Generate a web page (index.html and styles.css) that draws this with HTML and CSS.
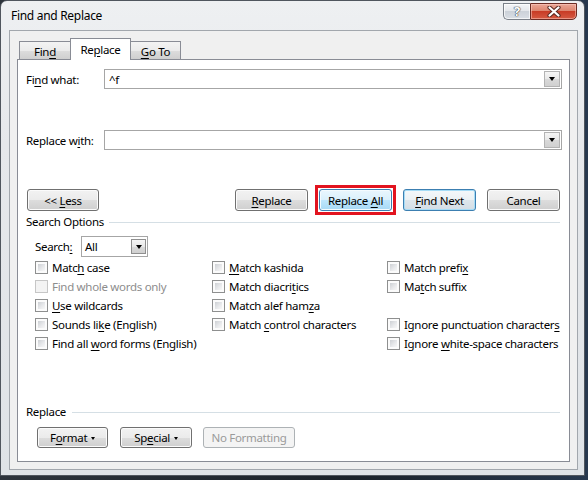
FILE: index.html
```html
<!DOCTYPE html>
<html>
<head>
<meta charset="utf-8">
<title>Find and Replace</title>
<link rel="stylesheet" href="styles.css">
</head>
<body>
<div class="window">
  <div class="titlebar">
    <span class="title">Find and Replace</span>
    <div class="caption">
      <div class="cap help">?</div>
      <div class="cap close">
        <svg width="14" height="11" viewBox="0 0 14 11">
          <path d="M2.5 1.5 L11.5 9.5 M11.5 1.5 L2.5 9.5" stroke="#5a2a22" stroke-width="4.2" stroke-linecap="round" fill="none"/>
          <path d="M2.5 1.5 L11.5 9.5 M11.5 1.5 L2.5 9.5" stroke="#ffffff" stroke-width="2.2" stroke-linecap="round" fill="none"/>
        </svg>
      </div>
    </div>
  </div>
  <div class="client">
    <div class="tabs">
      <div class="tab first"><span>Fin<u>d</u></span></div>
      <div class="tab active"><span>Re<u>p</u>lace</span></div>
      <div class="tab last"><span><u>G</u>o To</span></div>
    </div>
    <div class="panel">
      <div class="field-row r1">
        <span class="field-label">Fi<u>n</u>d what:</span>
        <div class="combo"><span class="val">^f</span><span class="drop"><i class="tri"></i></span></div>
      </div>
      <div class="field-row r2">
        <span class="field-label">Replace w<u>i</u>th:</span>
        <div class="combo"><span class="val"></span><span class="drop"><i class="tri"></i></span></div>
      </div>
      <div class="button-row">
        <div class="btn less"><span>&lt;&lt; <u>L</u>ess</span></div>
        <div class="spacer"></div>
        <div class="btn w73 gap7"><span><u>R</u>eplace</span></div>
        <div class="highlight gap7"><div class="btn hot"><span>Replace <u>A</u>ll</span></div></div>
        <div class="btn w73 default gap11"><span><u>F</u>ind Next</span></div>
        <div class="btn w73 cancel"><span>Cancel</span></div>
      </div>
      <div class="group-label"><span>Search Options</span></div>
      <div class="search-row">
        <span class="search-label">Search<u>:</u></span>
        <div class="select"><span class="val">All</span><span class="drop sdrop"><i class="tri"></i></span></div>
      </div>
      <div class="options">
        <div class="opt"><span class="box"></span><span>Matc<u>h</u> case</span></div>
        <div class="opt"><span class="box"></span><span><u>M</u>atch kashida</span></div>
        <div class="opt"><span class="box"></span><span>Match prefi<u>x</u></span></div>

        <div class="opt disabled"><span class="box"></span><span>Find whole words only</span></div>
        <div class="opt"><span class="box"></span><span>Match diacri<u>t</u>ics</span></div>
        <div class="opt"><span class="box"></span><span>Ma<u>t</u>ch suffix</span></div>

        <div class="opt"><span class="box"></span><span><u>U</u>se wildcards</span></div>
        <div class="opt"><span class="box"></span><span>Match alef ham<u>z</u>a</span></div>
        <div class="opt empty"></div>

        <div class="opt"><span class="box"></span><span>Sounds li<u>k</u>e (English)</span></div>
        <div class="opt"><span class="box"></span><span>Match <u>c</u>ontrol characters</span></div>
        <div class="opt"><span class="box"></span><span>Ignore punctuation character<u>s</u></span></div>

        <div class="opt"><span class="box"></span><span>Find all <u>w</u>ord forms (English)</span></div>
        <div class="opt empty"></div>
        <div class="opt"><span class="box"></span><span>Ignore <u>w</u>hite-space characters</span></div>
      </div>
      <div class="group-label replace-label"><span>Replace</span></div>
      <div class="bottom-row">
        <div class="btn small format"><span>F<u>o</u>rmat <i class="mini"></i></span></div>
        <div class="btn small special"><span>Sp<u>e</u>cial <i class="mini"></i></span></div>
        <div class="btn small disabled-btn"><span>No Formatting</span></div>
      </div>
    </div>
  </div>
</div>
</body>
</html>
```

FILE: styles.css
```css
* { box-sizing: border-box; }
html, body { margin: 0; padding: 0; }
body {
  width: 588px;
  height: 480px;
  overflow: hidden;
  background: linear-gradient(90deg, #2d343c, #1b222a 60%, #27384e);
  font-family: "Noto Sans", "DejaVu Sans", sans-serif;
  font-size: 11.5px;
  letter-spacing: -0.3px;
  color: #000;
}
u { text-decoration: underline; text-underline-offset: 2px; text-decoration-thickness: 1px; }

.window {
  width: 585px;
  height: 476px;
  border: 1px solid #50565e;
  border-radius: 7px 7px 0 0;
  background: linear-gradient(180deg, #eef0f2 0%, #e6e8eb 30%, #dfe3e7 100%);
  padding: 0 6px 5px 8px;
  display: flex;
  flex-direction: column;
}

.titlebar {
  height: 29px;
  display: flex;
  align-items: flex-start;
  flex: none;
}
.title {
  margin-top: 7px;
  padding-left: 2px;
  font-size: 12px;
  line-height: 16px;
}
.caption {
  margin-left: auto;
  margin-top: 2px;
  margin-right: 1px;
  display: flex;
}
.cap {
  height: 17px;
  display: flex;
  align-items: center;
  justify-content: center;
}
.help {
  width: 27px;
  border: 1px solid #7b8189;
  border-right: none;
  border-radius: 0 0 0 5px;
  background: linear-gradient(180deg, #f4f5f7 0%, #e4e7eb 45%, #ccd2d9 50%, #d9dee4 100%);
  box-shadow: inset 0 0 0 1px rgba(255,255,255,0.7);
  color: #fff;
  font-size: 13px;
  font-weight: bold;
  line-height: 15px;
  letter-spacing: 0;
  text-shadow: 0 0 1px #3c4046, 0 0 1px #3c4046, 0 0 1px #3c4046;
}
.close {
  width: 47px;
  border: 1px solid #6c2c24;
  border-radius: 0 0 5px 0;
  background: linear-gradient(180deg, #eba797 0%, #dd8670 45%, #c83c26 50%, #d55a42 100%);
  box-shadow: inset 0 0 0 1px rgba(255,210,200,0.5);
}

.client {
  height: 440px;
  flex: none;
  border: 1px solid #a2a7ad;
  background: #f0f0f0;
  padding: 7px;
  display: flex;
  flex-direction: column;
}

.tabs {
  height: 21px;
  flex: none;
  display: flex;
  align-items: flex-end;
  padding-left: 2px;
}
.tab {
  height: 18px;
  border: 1px solid #898c95;
  border-bottom: none;
  background: linear-gradient(180deg, #f3f3f3 0%, #ebebeb 50%, #dddddd 51%, #cfcfcf 100%);
  display: flex;
  align-items: center;
  justify-content: center;
  line-height: 14px;
  padding-top: 2px;
}
.tab.first { width: 51px; border-right: none; }
.tab.last { width: 50px; border-left: none; }
.tab.active {
  width: 61px;
  height: 22px;
  margin-bottom: -1px;
  background: #fff;
  position: relative;
  z-index: 1;
  padding-top: 1px;
  padding-bottom: 0;
}

.panel {
  flex: 1;
  border: 1px solid #898c95;
  background: #fff;
  padding: 0 7px 0 8px;
  display: flex;
  flex-direction: column;
}

.field-row {
  height: 20px;
  display: flex;
  align-items: center;
  flex: none;
}
.r1 { margin-top: 9px; }
.r2 { margin-top: 41px; }
.field-label { width: 78px; flex: none; }
.combo {
  flex: 1;
  height: 20px;
  border: 1px solid #a6a6a6;
  background: #fff;
  display: flex;
  align-items: center;
  padding: 0 1px 0 4px;
}
.combo .val { flex: 1; }
.drop {
  width: 16px;
  height: 16px;
  border: 1px solid #b3b3b3;
  background: linear-gradient(180deg, #f5f5f5 0%, #e8e8e8 50%, #d9d9d9 51%, #d0d0d0 100%);
  display: flex;
  align-items: center;
  justify-content: center;
  flex: none;
}
.tri {
  display: block;
  width: 0;
  height: 0;
  border-top: 4px solid #000;
  border-left: 3.5px solid transparent;
  border-right: 3.5px solid transparent;
}

.button-row {
  margin-top: 35px;
  height: 30px;
  display: flex;
  align-items: center;
  flex: none;
}
.spacer { flex: 1; }
.btn {
  height: 22px;
  border: 1px solid #707070;
  border-radius: 3px;
  background: linear-gradient(180deg, #f2f2f2 0%, #ebebeb 50%, #dddddd 51%, #cfcfcf 100%);
  box-shadow: inset 0 0 0 1px #fbfbfb;
  display: flex;
  align-items: center;
  justify-content: center;
  flex: none;
  white-space: nowrap;
}
.less { width: 72px; margin-left: 1px; }
.w73 { width: 73px; }
.gap7 { margin-right: 7px; }
.gap11 { margin-right: 11px; }
.cancel { margin-right: 2px; }
.highlight {
  width: 81px;
  height: 30px;
  border: 3px solid #e2141f;
  padding: 1px;
  flex: none;
}
.hot {
  width: 73px;
  border-color: #3c7fb1;
  background: linear-gradient(180deg, #eaf6fd 0%, #d9f0fc 50%, #bee6fd 51%, #a7d9f5 100%);
  box-shadow: inset 0 0 0 1px #f4fbfe;
}
.default {
  border-color: #3c7fb1;
  background: linear-gradient(180deg, #f4f8fa 0%, #ebf1f4 50%, #dde6ec 51%, #d3dde5 100%);
  box-shadow: inset 0 0 0 1px #a6dcf6;
}

.group-label {
  height: 14px;
  line-height: 14px;
  display: flex;
  align-items: center;
  flex: none;
}
.group-label::after {
  content: "";
  flex: 1;
  height: 1px;
  background: #d5dfe5;
  margin-left: 5px;
  margin-right: 2px;
}
.replace-label { margin-top: 52px; }
.replace-label::after { margin-left: 6px; }

.search-row {
  margin-top: 7px;
  height: 21px;
  display: flex;
  align-items: center;
  flex: none;
}
.search-label { width: 46px; margin-left: 9px; flex: none; }
.select {
  width: 67px;
  height: 21px;
  border: 1px solid #a6a6a6;
  display: flex;
  align-items: center;
  padding: 0 1px 0 3px;
}
.select .val { flex: 1; }
.sdrop { width: 15px; height: 15px; border-color: #8f8f8f; }

.options {
  margin-top: 1px;
  margin-left: 9px;
  display: grid;
  grid-template-columns: 177px 175px 1fr;
  grid-auto-rows: 19px;
  flex: none;
}
.opt {
  display: flex;
  align-items: center;
  gap: 4px;
  white-space: nowrap;
}
.box {
  width: 13px;
  height: 13px;
  flex: none;
  border: 1px solid #8e8f8f;
  padding: 2px;
  background: linear-gradient(135deg, #cdd0d4 0%, #e9eaec 60%, #f7f7f7 100%) content-box, #fbfbfb;
}
.opt.disabled { color: #8d8d8d; }
.opt.disabled .box {
  border-color: #c6c6c6;
  background: #f3f3f3;
}

.bottom-row {
  margin-top: 8px;
  height: 21px;
  display: flex;
  align-items: center;
  margin-left: 11px;
  flex: none;
}
.small { height: 21px; }
.format { width: 71px; margin-right: 12px; }
.special { width: 72px; margin-right: 11px; }
.mini {
  display: inline-block;
  vertical-align: middle;
  width: 0;
  height: 0;
  margin-left: 1px;
  border-top: 3px solid #000;
  border-left: 2.5px solid transparent;
  border-right: 2.5px solid transparent;
}
.disabled-btn {
  width: 92px;
  color: #9a9a9a;
  border-color: #adb2b5;
  background: #f4f4f4;
  box-shadow: none;
}
```
